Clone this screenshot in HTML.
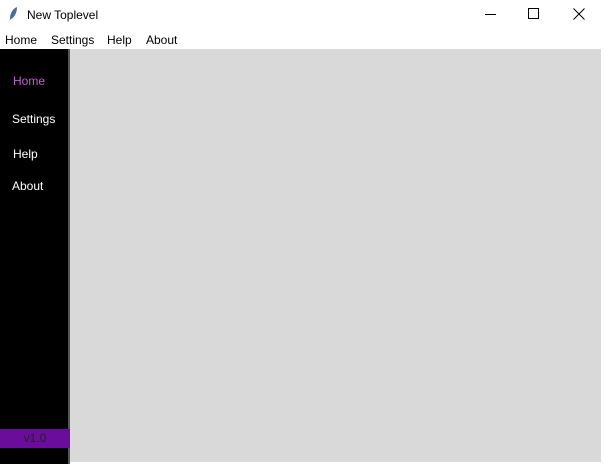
<!DOCTYPE html>
<html><head><style>
body{margin:0;width:604px;height:464px;background:#fff;position:relative;overflow:hidden;font-family:"Liberation Sans",sans-serif;font-size:12px}
.a{position:absolute}
</style></head><body>
<div class="a" style="left:8px;top:6px;width:10px;height:16px">
<svg width="10" height="16"><path d="M9 1 C4 3 2 8 2 13 L1 15 L3 13 C7 11 9 6 9 1Z" fill="#4a6da0"/></svg></div>
<div class="a" style="left:27px;top:8px;font-size:12px">New Toplevel</div>
<div class="a" style="left:485px;top:14px;width:11px;height:1px;background:#000"></div>
<div class="a" style="left:528px;top:8px;width:9px;height:9px;border:1px solid #000"></div>
<svg class="a" style="left:573px;top:8px" width="12" height="12"><path d="M0.5 0.5L11.5 11.5M11.5 0.5L0.5 11.5" stroke="#000"/></svg>
<div class="a" style="left:5px;top:33px">Home</div>
<div class="a" style="left:51px;top:33px">Settings</div>
<div class="a" style="left:107px;top:33px">Help</div>
<div class="a" style="left:146px;top:33px">About</div>
<div class="a" style="left:0;top:49px;width:68px;height:415px;background:#000"></div>
<div class="a" style="left:68px;top:49px;width:2px;height:415px;background:#555"></div>
<div class="a" style="left:70px;top:49px;width:531px;height:413px;background:#d9d9d9"></div>
<div class="a" style="left:13px;top:74px;color:#c060d0">Home</div>
<div class="a" style="left:12px;top:112px;color:#fff">Settings</div>
<div class="a" style="left:13px;top:147px;color:#fff">Help</div>
<div class="a" style="left:12px;top:179px;color:#fff">About</div>
<div class="a" style="left:0;top:429px;width:70px;height:19px;background:#6a0d9a;color:#222;text-align:center;line-height:19px">v1.0</div>
</body></html>
